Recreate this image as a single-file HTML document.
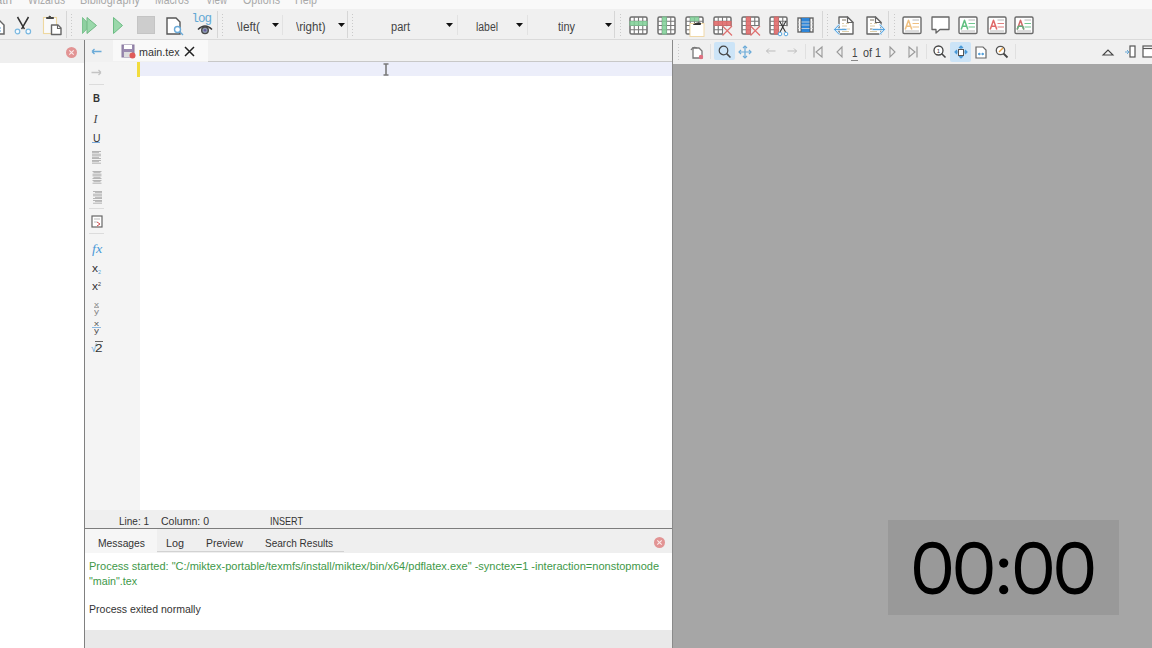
<!DOCTYPE html>
<html><head><meta charset="utf-8">
<style>
*{margin:0;padding:0;box-sizing:border-box}
html,body{width:1152px;height:648px;overflow:hidden;background:#f0f0f0;font-family:"Liberation Sans",sans-serif}
.a{position:absolute}
svg.a{overflow:visible}
.t{position:absolute;white-space:nowrap;line-height:1;transform-origin:0 0}
</style></head><body>
<div class="a" style="left:0px;top:0px;width:1152px;height:9px;background:#f9f9f9;"></div>
<div class="a" style="left:0px;top:9px;width:1152px;height:30px;background:#f0f0f0;"></div>
<div class="a" style="left:0px;top:39px;width:1152px;height:1px;background:#dadada;"></div>
<div class="a" style="left:0px;top:40px;width:84px;height:608px;background:#ffffff;"></div>
<div class="a" style="left:0px;top:40px;width:84px;height:23px;background:#efefef;"></div>
<div class="a" style="left:85px;top:40px;width:587px;height:22px;background:#f1f1f1;"></div>
<div class="a" style="left:113px;top:40px;width:95px;height:21px;background:#f9f9f9;"></div>
<div class="a" style="left:208px;top:61px;width:464px;height:1px;background:#c8c8c8;"></div>
<div class="a" style="left:85px;top:62px;width:55px;height:448px;background:#f4f4f4;"></div>
<div class="a" style="left:140px;top:62px;width:532px;height:448px;background:#ffffff;"></div>
<div class="a" style="left:140px;top:62px;width:532px;height:14px;background:#eceefa;"></div>
<div class="a" style="left:137px;top:62px;width:3px;height:15px;background:#f2dc3c;"></div>
<div class="a" style="left:85px;top:510px;width:587px;height:18px;background:#efefef;"></div>
<div class="a" style="left:85px;top:528px;width:587px;height:1px;background:#7c7c7c;"></div>
<div class="a" style="left:85px;top:529px;width:587px;height:24px;background:#efefef;"></div>
<div class="a" style="left:85px;top:529px;width:72px;height:24px;background:#f6f6f6;"></div>
<div class="a" style="left:157px;top:551px;width:187px;height:1px;background:#d2d2d2;"></div>
<div class="a" style="left:85px;top:553px;width:587px;height:77px;background:#ffffff;"></div>
<div class="a" style="left:85px;top:630px;width:587px;height:18px;background:#e9e9e9;"></div>
<div class="a" style="left:84px;top:40px;width:1px;height:608px;background:#808080;"></div>
<div class="a" style="left:672px;top:40px;width:1px;height:608px;background:#8a8a8a;"></div>
<div class="a" style="left:673px;top:40px;width:479px;height:24px;background:#f0f0f0;"></div>
<div class="a" style="left:673px;top:64px;width:479px;height:584px;background:#a6a6a6;"></div>
<div class="a" style="left:888px;top:520px;width:231px;height:95px;background:#999999;"></div>
<div class="a" style="left:0;top:0;width:1152px;height:9px;overflow:hidden">
<div class="t" style="left:-14.00px;top:-5.86px;font-size:12px;color:#a9a9a9;transform:scaleX(0.9747);">Math</div>
<div class="t" style="left:28.00px;top:-5.86px;font-size:12px;color:#a9a9a9;transform:scaleX(0.8538);">Wizards</div>
<div class="t" style="left:80.00px;top:-5.86px;font-size:12px;color:#a9a9a9;transform:scaleX(0.9086);">Bibliography</div>
<div class="t" style="left:155.00px;top:-5.86px;font-size:12px;color:#a9a9a9;transform:scaleX(0.8643);">Macros</div>
<div class="t" style="left:206.00px;top:-5.86px;font-size:12px;color:#a9a9a9;transform:scaleX(0.8142);">View</div>
<div class="t" style="left:243.00px;top:-5.86px;font-size:12px;color:#a9a9a9;transform:scaleX(0.8947);">Options</div>
<div class="t" style="left:295.00px;top:-5.86px;font-size:12px;color:#a9a9a9;transform:scaleX(0.8915);">Help</div>
</div>
<div class="a" style="left:66px;top:11px;width:1px;height:27px;background:#d6d6d6;"></div>
<div class="a" style="left:217px;top:11px;width:1px;height:27px;background:#d6d6d6;"></div>
<div class="a" style="left:347px;top:11px;width:1px;height:27px;background:#d6d6d6;"></div>
<div class="a" style="left:614px;top:11px;width:1px;height:27px;background:#d6d6d6;"></div>
<div class="a" style="left:822px;top:11px;width:1px;height:27px;background:#d6d6d6;"></div>
<div class="a" style="left:888px;top:11px;width:1px;height:27px;background:#d6d6d6;"></div>
<div class="a" style="left:71px;top:14px;width:1px;height:23px;background-image:linear-gradient(#cacaca 34%,transparent 34%);background-size:1px 3px"></div>
<div class="a" style="left:222px;top:14px;width:1px;height:23px;background-image:linear-gradient(#cacaca 34%,transparent 34%);background-size:1px 3px"></div>
<div class="a" style="left:352px;top:14px;width:1px;height:23px;background-image:linear-gradient(#cacaca 34%,transparent 34%);background-size:1px 3px"></div>
<div class="a" style="left:620px;top:14px;width:1px;height:23px;background-image:linear-gradient(#cacaca 34%,transparent 34%);background-size:1px 3px"></div>
<div class="a" style="left:827px;top:14px;width:1px;height:23px;background-image:linear-gradient(#cacaca 34%,transparent 34%);background-size:1px 3px"></div>
<div class="a" style="left:894px;top:14px;width:1px;height:23px;background-image:linear-gradient(#cacaca 34%,transparent 34%);background-size:1px 3px"></div>
<div class="a" style="left:282px;top:15px;width:1px;height:20px;background:#e2e2e2;"></div>
<div class="a" style="left:457px;top:15px;width:1px;height:20px;background:#e2e2e2;"></div>
<div class="a" style="left:527px;top:15px;width:1px;height:20px;background:#e2e2e2;"></div>
<div class="t" style="left:237.00px;top:20.84px;font-size:12px;color:#444;transform:scaleX(0.9856);">\left(</div>
<div class="t" style="left:295.50px;top:20.84px;font-size:12px;color:#444;transform:scaleX(0.9618);">\right)</div>
<div class="t" style="left:391.00px;top:20.84px;font-size:12px;color:#444;transform:scaleX(0.9190);">part</div>
<div class="t" style="left:476.00px;top:20.84px;font-size:12px;color:#444;transform:scaleX(0.8678);">label</div>
<div class="t" style="left:558.00px;top:20.84px;font-size:12px;color:#444;transform:scaleX(0.9104);">tiny</div>
<svg class="a" style="left:272px;top:23px" width="7" height="4" viewBox="0 0 7 4"><path d="M0 0H7L3.5 4Z" fill="#111"/></svg>
<svg class="a" style="left:338px;top:23px" width="7" height="4" viewBox="0 0 7 4"><path d="M0 0H7L3.5 4Z" fill="#111"/></svg>
<svg class="a" style="left:446px;top:23px" width="7" height="4" viewBox="0 0 7 4"><path d="M0 0H7L3.5 4Z" fill="#111"/></svg>
<svg class="a" style="left:516px;top:23px" width="7" height="4" viewBox="0 0 7 4"><path d="M0 0H7L3.5 4Z" fill="#111"/></svg>
<svg class="a" style="left:605px;top:23px" width="7" height="4" viewBox="0 0 7 4"><path d="M0 0H7L3.5 4Z" fill="#111"/></svg>
<svg class="a" style="left:-10px;top:19px" width="15" height="16" viewBox="0 0 15 16"><path d="M1 1H9L14 6V15H1Z" fill="#fff" stroke="#666" stroke-width="1.5"/><path d="M4 9H11M4 12H11" stroke="#5aa0d8" stroke-width="1.2"/></svg>
<svg class="a" style="left:14px;top:16px" width="18" height="20" viewBox="0 0 18 20"><path d="M3.5 1L9 10.5Q10 12.5 10.5 13M14.5 1L9 10.5Q8 12.5 7.5 13" stroke="#333" stroke-width="1.5" fill="none"/><circle cx="3.5" cy="15.5" r="2.3" fill="#f4faff" stroke="#7ab8e0" stroke-width="1.2"/><circle cx="14.3" cy="15.5" r="2.3" fill="#f4faff" stroke="#7ab8e0" stroke-width="1.2"/></svg>
<svg class="a" style="left:42px;top:15px" width="20" height="21" viewBox="0 0 20 21"><rect x="1.5" y="2.5" width="13" height="16" fill="#fafafa" stroke="#eed8a0" stroke-width="1.1"/><path d="M4.5 3.5H11.5V2.5H9L8 1H7.5L6.5 2.5H4.5Z" fill="#444" stroke="#444" stroke-width="1"/><path d="M9.5 10H16L19 13V19.5H9.5Z" fill="#fff" stroke="#666" stroke-width="1.4" stroke-linejoin="round"/><path d="M15.5 10V13.5H19" fill="none" stroke="#666" stroke-width="1.1"/></svg>
<svg class="a" style="left:82px;top:17px" width="16" height="18" viewBox="0 0 16 18"><path d="M0.5 0.5L8 8.5L0.5 16.5Z" fill="#8fd0a0" stroke="#7cc490"/><path d="M5 0.5L14.5 8.5L5 16.5Z" fill="#9ad8aa" stroke="#70b884"/></svg>
<svg class="a" style="left:113px;top:17px" width="10" height="18" viewBox="0 0 10 18"><path d="M0.5 0.5L9.5 8.5L0.5 16.5Z" fill="#9ad8aa" stroke="#6cbc84"/></svg>
<div class="a" style="left:137px;top:16px;width:18px;height:18px;background:#cdcdcd;border:1px solid #c4c4c4"></div>
<svg class="a" style="left:166px;top:17px" width="18" height="19" viewBox="0 0 18 19"><path d="M1 1H10L14 5V17H1Z" fill="#fff" stroke="#555" stroke-width="1.4"/><circle cx="11.5" cy="12.5" r="3" fill="#fff" stroke="#6aaad8" stroke-width="1.4"/><path d="M13.5 14.5L17 18" stroke="#6aaad8" stroke-width="1.4"/></svg>
<div class="t" style="left:191.5px;top:12.5px;font-size:12.5px;color:#62a8d4;font-family:Liberation Mono,monospace;letter-spacing:-1px">log</div>
<svg class="a" style="left:197px;top:24px" width="16" height="11" viewBox="0 0 16 11"><path d="M1 5.5Q8 -1.5 15 5.5" fill="none" stroke="#3a3a3a" stroke-width="1.5"/><circle cx="8" cy="6.3" r="3.3" fill="#8a9ab0" stroke="#4a4a4a" stroke-width="1.4"/><circle cx="8" cy="6.3" r="1.2" fill="#6a5aa0"/></svg>
<svg class="a" style="left:629px;top:15.5px" width="19" height="19" viewBox="0 0 19 19"><rect x="1" y="1" width="17" height="17" fill="#fff"/><rect x="1" y="1" width="17" height="17" rx="1.5" fill="none" stroke="#6e6e6e" stroke-width="1.5"/><path d="M5.25 1V18M1 5.25H18" stroke="#777" stroke-width="1.1"/><path d="M9.5 1V18M1 9.5H18" stroke="#777" stroke-width="1.1"/><path d="M13.75 1V18M1 13.75H18" stroke="#777" stroke-width="1.1"/><rect x="0.5" y="5" width="18" height="4.8" fill="#7fd096" opacity="0.85"/></svg>
<svg class="a" style="left:656.5px;top:15.5px" width="19" height="19" viewBox="0 0 19 19"><rect x="1" y="1" width="17" height="17" fill="#fff"/><rect x="1" y="1" width="17" height="17" rx="1.5" fill="none" stroke="#6e6e6e" stroke-width="1.5"/><path d="M5.25 1V18M1 5.25H18" stroke="#777" stroke-width="1.1"/><path d="M9.5 1V18M1 9.5H18" stroke="#777" stroke-width="1.1"/><path d="M13.75 1V18M1 13.75H18" stroke="#777" stroke-width="1.1"/><rect x="5" y="0.5" width="4.8" height="18" fill="#7fd096" opacity="0.85"/></svg>
<svg class="a" style="left:685px;top:15.5px" width="19" height="19" viewBox="0 0 19 19"><rect x="1" y="1" width="17" height="17" fill="#fff"/><rect x="1" y="1" width="17" height="17" rx="1.5" fill="none" stroke="#6e6e6e" stroke-width="1.5"/><path d="M5.25 1V18M1 5.25H18" stroke="#777" stroke-width="1.1"/><path d="M9.5 1V18M1 9.5H18" stroke="#777" stroke-width="1.1"/><path d="M13.75 1V18M1 13.75H18" stroke="#777" stroke-width="1.1"/><rect x="5" y="0.5" width="9" height="4.8" fill="#7fd096" opacity="0.85"/></svg>
<svg class="a" style="left:689px;top:21px" width="16" height="16" viewBox="0 0 16 16"><rect x="1" y="2.5" width="14" height="13" fill="#fff" stroke="#f0d8a8" stroke-width="1"/><path d="M4.5 3.5H11.5V2H8Z" fill="#333" stroke="#333" stroke-width="1"/></svg>
<svg class="a" style="left:713px;top:15.5px" width="19" height="19" viewBox="0 0 19 19"><rect x="1" y="1" width="17" height="17" fill="#fff"/><rect x="1" y="1" width="17" height="17" rx="1.5" fill="none" stroke="#6e6e6e" stroke-width="1.5"/><path d="M5.25 1V18M1 5.25H18" stroke="#777" stroke-width="1.1"/><path d="M9.5 1V18M1 9.5H18" stroke="#777" stroke-width="1.1"/><path d="M13.75 1V18M1 13.75H18" stroke="#777" stroke-width="1.1"/><rect x="10.2" y="10.2" width="9" height="9" fill="#f0f0f0"/><rect x="0.5" y="5" width="18" height="4.8" fill="#e06a6a" opacity="0.9"/><path d="M9.5 10L19 19.5M19 10L9.5 19.5" stroke="#e07070" stroke-width="1.2"/></svg>
<svg class="a" style="left:741px;top:15.5px" width="19" height="19" viewBox="0 0 19 19"><rect x="1" y="1" width="17" height="17" fill="#fff"/><rect x="1" y="1" width="17" height="17" rx="1.5" fill="none" stroke="#6e6e6e" stroke-width="1.5"/><path d="M5.25 1V18M1 5.25H18" stroke="#777" stroke-width="1.1"/><path d="M9.5 1V18M1 9.5H18" stroke="#777" stroke-width="1.1"/><path d="M13.75 1V18M1 13.75H18" stroke="#777" stroke-width="1.1"/><rect x="10.2" y="10.2" width="9" height="9" fill="#f0f0f0"/><rect x="5" y="0.5" width="4.8" height="18" fill="#e06a6a" opacity="0.9"/><path d="M9.5 10L19 19.5M19 10L9.5 19.5" stroke="#e07070" stroke-width="1.2"/></svg>
<svg class="a" style="left:769px;top:15.5px" width="19" height="19" viewBox="0 0 19 19"><rect x="1" y="1" width="17" height="17" fill="#fff"/><rect x="1" y="1" width="17" height="17" rx="1.5" fill="none" stroke="#6e6e6e" stroke-width="1.5"/><path d="M5.25 1V18M1 5.25H18" stroke="#777" stroke-width="1.1"/><path d="M9.5 1V18M1 9.5H18" stroke="#777" stroke-width="1.1"/><path d="M13.75 1V18M1 13.75H18" stroke="#777" stroke-width="1.1"/><rect x="10.2" y="10.2" width="9" height="9" fill="#f0f0f0"/><rect x="5" y="0.5" width="4.8" height="18" fill="#e06a6a" opacity="0.9"/><path d="M10.5 5L16.5 16M17 5L11 16" stroke="#333" stroke-width="1.1"/><circle cx="11" cy="18" r="1.8" fill="#fff" stroke="#5aa8e0"/><circle cx="17" cy="18" r="1.8" fill="#fff" stroke="#5aa8e0"/></svg>
<svg class="a" style="left:797px;top:17px" width="17" height="16" viewBox="0 0 17 16"><rect x="1" y="1" width="15" height="14" fill="#fff" stroke="#666" stroke-width="1.4"/><rect x="4" y="1" width="9" height="14" fill="#2f86d8"/><path d="M4 5H16M4 8H16M4 11.5H16M1 5H4M1 8H4M1 11.5H4" stroke="#ddd" stroke-width="0.8"/><path d="M4 1V15M13 1V15" stroke="#444" stroke-width="0.8"/></svg>
<svg class="a" style="left:838px;top:15.5px" width="16" height="20" viewBox="0 0 16 20"><path d="M1 1H9.5L15 6.5V18H1Z" fill="#fff" stroke="#666" stroke-width="1.4" stroke-linejoin="round"/><path d="M9.5 1V6.5H15Z" fill="#fff" stroke="#666" stroke-width="1.2" stroke-linejoin="round"/><path d="M4 4H8M4 7.5H6M8 7.5H11M4 10H9M4 13H12M4 15.5H11" stroke="#d8c8a0" stroke-width="0.9"/><path d="M4 4H8M4 13H7" stroke="#888" stroke-width="0.9"/><path d="M-3.5 13.5H8M-3.5 13.5L0.8 9M-3.5 13.5L0.8 18" fill="none" stroke-linecap="round" stroke="#d8ecfa" stroke-width="2.4"/><path d="M-3.5 13.5H8M-3.5 13.5L0.8 9M-3.5 13.5L0.8 18" fill="none" stroke-linecap="round" stroke="#5aa6e0" stroke-width="1"/></svg>
<svg class="a" style="left:866px;top:15.5px" width="16" height="20" viewBox="0 0 16 20"><path d="M1 1H9.5L15 6.5V18H1Z" fill="#fff" stroke="#666" stroke-width="1.4" stroke-linejoin="round"/><path d="M9.5 1V6.5H15Z" fill="#fff" stroke="#666" stroke-width="1.2" stroke-linejoin="round"/><path d="M4 4H8M4 7.5H6M8 7.5H11M4 10H9M4 13H12M4 15.5H11" stroke="#d8c8a0" stroke-width="0.9"/><path d="M4 4H8M4 13H7" stroke="#888" stroke-width="0.9"/><path d="M7 13.5H18.5M18.5 13.5L14.2 9M18.5 13.5L14.2 18" fill="none" stroke-linecap="round" stroke="#d8ecfa" stroke-width="2.4"/><path d="M7 13.5H18.5M18.5 13.5L14.2 9M18.5 13.5L14.2 18" fill="none" stroke-linecap="round" stroke="#5aa6e0" stroke-width="1"/></svg>
<svg class="a" style="left:902px;top:16px" width="20" height="19" viewBox="0 0 20 19"><rect x="1" y="1" width="18" height="16.5" rx="1.2" fill="#fff" stroke="#6a6a6a" stroke-width="1.4"/><path d="M3.2 13.5L6.5 4.2L9.8 13.5M4.3 10.3H8.7" fill="none" stroke="#f0c080" stroke-width="1.5" stroke-linejoin="round"/><path d="M10.5 4H17" stroke="#b0b0b0" stroke-width="0.9"/><path d="M10.5 7.5H17M10.5 11H17" stroke="#f0c080" stroke-width="1.2"/><path d="M3 15H17" stroke="#b0b0b0" stroke-width="0.9"/></svg>
<svg class="a" style="left:931px;top:16px" width="19" height="18" viewBox="0 0 19 18"><path d="M1 1H18V13.5H9L5 17V13.5H1Z" fill="#fff" stroke="#666" stroke-width="1.3" stroke-linejoin="round"/></svg>
<svg class="a" style="left:958px;top:16px" width="20" height="19" viewBox="0 0 20 19"><rect x="1" y="1" width="18" height="16.5" rx="1.2" fill="#fff" stroke="#6a6a6a" stroke-width="1.4"/><path d="M3.2 13.5L6.5 4.2L9.8 13.5M4.3 10.3H8.7" fill="none" stroke="#60c080" stroke-width="1.5" stroke-linejoin="round"/><path d="M10.5 4H17" stroke="#b0b0b0" stroke-width="0.9"/><path d="M10.5 7.5H17M10.5 11H17" stroke="#70c890" stroke-width="1.2"/><path d="M3 15H17" stroke="#b0b0b0" stroke-width="0.9"/></svg>
<svg class="a" style="left:986.5px;top:16px" width="20" height="19" viewBox="0 0 20 19"><rect x="1" y="1" width="18" height="16.5" rx="1.2" fill="#fff" stroke="#6a6a6a" stroke-width="1.4"/><path d="M3.2 13.5L6.5 4.2L9.8 13.5M4.3 10.3H8.7" fill="none" stroke="#e06868" stroke-width="1.5" stroke-linejoin="round"/><path d="M10.5 4H17" stroke="#b0b0b0" stroke-width="0.9"/><path d="M10.5 7.5H17M10.5 11H17" stroke="#e08080" stroke-width="1.2"/><path d="M3 15H17" stroke="#b0b0b0" stroke-width="0.9"/></svg>
<svg class="a" style="left:1014px;top:16px" width="20" height="19" viewBox="0 0 20 19"><rect x="1" y="1" width="18" height="16.5" rx="1.2" fill="#fff" stroke="#6a6a6a" stroke-width="1.4"/><path d="M3.2 13.5L6.5 4.2L9.8 13.5M4.3 10.3H8.7" fill="none" stroke="#d06868" stroke-width="1.5" stroke-linejoin="round"/><path d="M4.3 10.3L3.2 13.5M8.7 10.3L9.8 13.5M4.3 10.3H8.7" stroke="#60b080" stroke-width="1.5"/><path d="M10.5 4H17" stroke="#b0b0b0" stroke-width="0.9"/><path d="M10.5 7.5H17M10.5 11H17" stroke="#70c890" stroke-width="1.2"/><path d="M3 15H17" stroke="#b0b0b0" stroke-width="0.9"/></svg>
<svg class="a" style="left:66px;top:47px" width="11" height="11" viewBox="0 0 11 11"><circle cx="5.5" cy="5.5" r="5.5" fill="#e29494"/><path d="M3.3 3.3L7.7 7.7M7.7 3.3L3.3 7.7" stroke="#fbeaea" stroke-width="1.1"/></svg>
<svg class="a" style="left:121px;top:44px" width="15" height="15" viewBox="0 0 15 15"><rect x="1" y="1" width="12" height="12" fill="#9a8ab0" stroke="#8a7aa0"/><rect x="3" y="1" width="8" height="4" fill="#fff"/><rect x="3" y="8" width="8" height="5" fill="#ddd"/><circle cx="11.5" cy="11.5" r="3" fill="#e05a5a"/></svg>
<div class="t" style="left:138.50px;top:46.67px;font-size:11.5px;color:#333;transform:scaleX(0.9319);">main.tex</div>
<svg class="a" style="left:184px;top:46px" width="11" height="11" viewBox="0 0 11 11"><path d="M1 1L10 10M10 1L1 10" stroke="#222" stroke-width="1.5"/></svg>
<svg class="a" style="left:91px;top:48px" width="11" height="7" viewBox="0 0 11 7"><path d="M1 3.5H10.5M1 3.5L3.5 1M1 3.5L3.5 6" stroke="#6aaad8" stroke-width="1.3" fill="none"/></svg>
<svg class="a" style="left:91px;top:69px" width="11" height="7" viewBox="0 0 11 7"><path d="M0.5 3.5H10M10 3.5L7.5 1M10 3.5L7.5 6" stroke="#c4c4c4" stroke-width="1.3" fill="none"/></svg>
<div class="a" style="left:89px;top:84px;width:15px;height:1px;background:#dcdcdc;"></div>
<div class="t" style="left:92.50px;top:93.49px;font-size:11px;color:#333;font-weight:bold;transform:scaleX(0.8812);">B</div>
<div class="t" style="left:93.50px;top:112.64px;font-size:12px;color:#444;transform:scaleX(1.0000);font-style:italic;font-family:Liberation Serif,serif;">I</div>
<div class="t" style="left:92.50px;top:132.99px;font-size:11px;color:#333;transform:scaleX(0.9441);">U</div>
<div class="a" style="left:92px;top:142px;width:8px;height:1px;background:#7aa8d8;"></div>
<svg class="a" style="left:92px;top:150px" width="10" height="14" viewBox="0 0 10 14"><rect x="0" y="1.0" width="9" height="0.7" fill="#9a9a9a"/><rect x="0" y="2.4" width="7" height="0.7" fill="#9a9a9a"/><rect x="0" y="3.8" width="9" height="0.7" fill="#9a9a9a"/><rect x="0" y="5.5" width="9" height="0.7" fill="#9a9a9a"/><rect x="0" y="6.9" width="7" height="0.7" fill="#9a9a9a"/><rect x="0" y="8.3" width="9" height="0.7" fill="#9a9a9a"/><rect x="0" y="10.0" width="9" height="0.7" fill="#9a9a9a"/><rect x="0" y="11.4" width="7" height="0.7" fill="#9a9a9a"/><rect x="0" y="12.8" width="9" height="0.7" fill="#9a9a9a"/></svg>
<svg class="a" style="left:92px;top:170px" width="10" height="14" viewBox="0 0 10 14"><rect x="0.5" y="1.0" width="9" height="0.7" fill="#9a9a9a"/><rect x="1.5" y="2.4" width="7" height="0.7" fill="#9a9a9a"/><rect x="0.5" y="3.8" width="9" height="0.7" fill="#9a9a9a"/><rect x="0.5" y="5.5" width="9" height="0.7" fill="#9a9a9a"/><rect x="1.5" y="6.9" width="7" height="0.7" fill="#9a9a9a"/><rect x="0.5" y="8.3" width="9" height="0.7" fill="#9a9a9a"/><rect x="0.5" y="10.0" width="9" height="0.7" fill="#9a9a9a"/><rect x="1.5" y="11.4" width="7" height="0.7" fill="#9a9a9a"/><rect x="0.5" y="12.8" width="9" height="0.7" fill="#9a9a9a"/></svg>
<svg class="a" style="left:92px;top:190px" width="10" height="14" viewBox="0 0 10 14"><rect x="1" y="1.0" width="9" height="0.7" fill="#9a9a9a"/><rect x="3" y="2.4" width="7" height="0.7" fill="#9a9a9a"/><rect x="1" y="3.8" width="9" height="0.7" fill="#9a9a9a"/><rect x="1" y="5.5" width="9" height="0.7" fill="#9a9a9a"/><rect x="3" y="6.9" width="7" height="0.7" fill="#9a9a9a"/><rect x="1" y="8.3" width="9" height="0.7" fill="#9a9a9a"/><rect x="1" y="10.0" width="9" height="0.7" fill="#9a9a9a"/><rect x="3" y="11.4" width="7" height="0.7" fill="#9a9a9a"/><rect x="1" y="12.8" width="9" height="0.7" fill="#9a9a9a"/></svg>
<div class="a" style="left:89px;top:208px;width:15px;height:1px;background:#dcdcdc;"></div>
<svg class="a" style="left:91px;top:215px" width="12" height="13" viewBox="0 0 12 13"><rect x="1" y="1" width="10" height="11" fill="#fff" stroke="#666" stroke-width="1.2"/><path d="M3 4H9M3 7H6" stroke="#aaa" stroke-width="0.8"/><path d="M6 7L9 9L6 11" stroke="#d05050" fill="none" stroke-width="1"/></svg>
<div class="a" style="left:89px;top:233px;width:15px;height:1px;background:#dcdcdc;"></div>
<div class="t" style="left:92.00px;top:241.80px;font-size:13px;color:#4a9ad8;transform:scaleX(1.0879);font-style:italic;font-family:Liberation Serif,serif;">fx</div>
<div class="t" style="left:92.00px;top:264.34px;font-size:10px;color:#333;transform:scaleX(1.2000);">x</div>
<div class="t" style="left:98.00px;top:269.57px;font-size:5px;color:#5aa8d8;transform:scaleX(1.0790);">2</div>
<div class="t" style="left:92.00px;top:282.34px;font-size:10px;color:#333;transform:scaleX(1.2000);">x</div>
<div class="t" style="left:98.00px;top:281.57px;font-size:5px;color:#333;transform:scaleX(1.0790);">2</div>
<div class="t" style="left:94.00px;top:300.87px;font-size:7px;color:#888;transform:scaleX(1.4286);">x</div>
<div class="a" style="left:94px;top:307px;width:5px;height:1px;background:#aaa;"></div>
<div class="t" style="left:94.00px;top:307.87px;font-size:7px;color:#888;transform:scaleX(1.4286);">y</div>
<div class="t" style="left:94.00px;top:320.03px;font-size:8px;color:#555;transform:scaleX(1.2500);">x</div>
<div class="a" style="left:92px;top:327px;width:9px;height:1px;background:#8ab8e0;"></div>
<div class="t" style="left:94.00px;top:327.03px;font-size:8px;color:#555;transform:scaleX(1.2500);">y</div>
<div class="t" style="left:90.50px;top:343.49px;font-size:11px;color:#4a9ad8;transform:scaleX(0.9109);">√</div>
<div class="t" style="left:95.00px;top:343.49px;font-size:11px;color:#333;transform:scaleX(1.2261);">2</div>
<div class="a" style="left:95px;top:341px;width:8px;height:1px;background:#666;"></div>
<svg class="a" style="left:383px;top:63px" width="6" height="13" viewBox="0 0 6 13"><path d="M0.5 1H5.5M0.5 12H5.5M3 1V12" stroke="#7a7a7a" stroke-width="1.6"/></svg>
<div class="t" style="left:118.50px;top:516.29px;font-size:11px;color:#333;transform:scaleX(0.9084);">Line: 1</div>
<div class="t" style="left:161.00px;top:516.29px;font-size:11px;color:#333;transform:scaleX(0.9575);">Column: 0</div>
<div class="t" style="left:269.50px;top:516.29px;font-size:11px;color:#333;transform:scaleX(0.8222);">INSERT</div>
<div class="t" style="left:97.50px;top:538.49px;font-size:11px;color:#333;transform:scaleX(0.9375);">Messages</div>
<div class="t" style="left:166.00px;top:538.49px;font-size:11px;color:#333;transform:scaleX(0.9809);">Log</div>
<div class="t" style="left:206.00px;top:538.49px;font-size:11px;color:#333;transform:scaleX(0.9458);">Preview</div>
<div class="t" style="left:265.00px;top:538.49px;font-size:11px;color:#333;transform:scaleX(0.9117);">Search Results</div>
<svg class="a" style="left:654px;top:537px" width="11" height="11" viewBox="0 0 11 11"><circle cx="5.5" cy="5.5" r="5.5" fill="#e29494"/><path d="M3.3 3.3L7.7 7.7M7.7 3.3L3.3 7.7" stroke="#fbeaea" stroke-width="1.1"/></svg>
<div class="t" style="left:89.00px;top:561.29px;font-size:11px;color:#3e9848;transform:scaleX(1.0017);">Process started: &quot;C:/miktex-portable/texmfs/install/miktex/bin/x64/pdflatex.exe&quot; -synctex=1 -interaction=nonstopmode</div>
<div class="t" style="left:89.00px;top:575.69px;font-size:11px;color:#3e9848;transform:scaleX(0.9721);">&quot;main&quot;.tex</div>
<div class="t" style="left:89.00px;top:604.49px;font-size:11px;color:#333;transform:scaleX(0.9567);">Process exited normally</div>
<div class="a" style="left:678px;top:44px;width:1px;height:16px;background-image:linear-gradient(#cacaca 34%,transparent 34%);background-size:1px 3px"></div>
<svg class="a" style="left:690px;top:46px" width="14" height="13" viewBox="0 0 14 13"><path d="M3 2H9L12 5V12H3Z" fill="#fff" stroke="#777" stroke-width="1.3"/><path d="M1 4Q3 0 7 2" stroke="#777" fill="none" stroke-width="1.2"/><circle cx="11" cy="11" r="2.2" fill="#e07080"/></svg>
<div class="a" style="left:710px;top:44px;width:1px;height:15px;background:#e0e0e0;"></div>
<div class="a" style="left:714px;top:42px;width:21px;height:18px;background:#cce4f7;border-radius:2px"></div>
<svg class="a" style="left:718px;top:45px" width="14" height="14" viewBox="0 0 14 14"><circle cx="5.5" cy="5.5" r="4.3" fill="none" stroke="#444" stroke-width="1.2"/><path d="M8.6 8.6L12.5 12.5" stroke="#444" stroke-width="1.5"/></svg>
<svg class="a" style="left:738px;top:45px" width="14" height="14" viewBox="0 0 14 14"><path d="M7 1V13M1 7H13" stroke="#6aaad8" stroke-width="1.2"/><path d="M5 3L7 1L9 3M5 11L7 13L9 11M3 5L1 7L3 9M11 5L13 7L11 9" stroke="#6aaad8" fill="none" stroke-width="1.2"/></svg>
<svg class="a" style="left:766px;top:48px" width="10" height="6" viewBox="0 0 10 6"><path d="M0.5 3H9.5M0.5 3L3 0.5M0.5 3L3 5.5" stroke="#bbb" fill="none"/></svg>
<svg class="a" style="left:787px;top:48px" width="10" height="6" viewBox="0 0 10 6"><path d="M0.5 3H9.5M9.5 3L7 0.5M9.5 3L7 5.5" stroke="#bbb" fill="none"/></svg>
<div class="a" style="left:805px;top:44px;width:1px;height:15px;background:#e0e0e0;"></div>
<svg class="a" style="left:813px;top:46px" width="10" height="12" viewBox="0 0 10 12"><path d="M1 0.5V11.5" stroke="#999" stroke-width="1.2"/><path d="M9 1L3 6L9 11Z" fill="none" stroke="#999" stroke-width="1.1"/></svg>
<svg class="a" style="left:836px;top:46px" width="7" height="12" viewBox="0 0 7 12"><path d="M6 1L1 6L6 11Z" fill="none" stroke="#999" stroke-width="1.1"/></svg>
<div class="t" style="left:851.50px;top:47.14px;font-size:12px;color:#444;transform:scaleX(0.8242);">1</div>
<div class="a" style="left:851px;top:60px;width:7px;height:1px;background:#888;"></div>
<div class="t" style="left:863.00px;top:47.14px;font-size:12px;color:#444;transform:scaleX(0.8994);">of 1</div>
<svg class="a" style="left:889px;top:46px" width="7" height="12" viewBox="0 0 7 12"><path d="M1 1L6 6L1 11Z" fill="none" stroke="#999" stroke-width="1.1"/></svg>
<svg class="a" style="left:908px;top:46px" width="10" height="12" viewBox="0 0 10 12"><path d="M1 1L7 6L1 11Z" fill="none" stroke="#999" stroke-width="1.1"/><path d="M9 0.5V11.5" stroke="#999" stroke-width="1.2"/></svg>
<div class="a" style="left:926px;top:44px;width:1px;height:15px;background:#e0e0e0;"></div>
<svg class="a" style="left:933px;top:45px" width="13" height="14" viewBox="0 0 13 14"><circle cx="5.5" cy="5.5" r="4.5" fill="#fff" stroke="#444" stroke-width="1.3"/><path d="M8.5 8.5L12.5 12.5" stroke="#444" stroke-width="1.6"/><text x="5.5" y="8" font-size="6" text-anchor="middle" fill="#444" font-family="Liberation Sans">1</text></svg>
<div class="a" style="left:950px;top:42px;width:21px;height:20px;background:#cce4f7;border-radius:2px"></div>
<svg class="a" style="left:954px;top:45px" width="14" height="14" viewBox="0 0 14 14"><path d="M7 1V13M1 7H13" stroke="#4a9ad8" stroke-width="1.2"/><path d="M5 3L7 1L9 3M5 11L7 13L9 11M3 5L1 7L3 9M11 5L13 7L11 9" stroke="#4a9ad8" fill="#4a9ad8" stroke-width="1.2"/><rect x="4.5" y="4.5" width="5" height="6" fill="#fff" stroke="#555"/></svg>
<svg class="a" style="left:975px;top:46px" width="12" height="13" viewBox="0 0 12 13"><path d="M1 1H8L11 4V12H1Z" fill="#fff" stroke="#666" stroke-width="1.2"/><path d="M3 8L5 7L5 9ZM9 8L7 7L7 9Z" fill="#4a9ad8" stroke="#4a9ad8" stroke-width="0.8"/></svg>
<svg class="a" style="left:995px;top:45px" width="14" height="14" viewBox="0 0 14 14"><circle cx="5.5" cy="5.5" r="4.2" fill="#fff" stroke="#555" stroke-width="1.3"/><path d="M8.5 8.5L12.5 12.5" stroke="#444" stroke-width="1.8"/><path d="M4 7L8 3" stroke="#e8a040" stroke-width="1.4"/></svg>
<div class="a" style="left:1015px;top:44px;width:1px;height:15px;background:#e0e0e0;"></div>
<svg class="a" style="left:1102px;top:49px" width="12" height="7" viewBox="0 0 12 7"><path d="M1 6H11L6 1Z" fill="none" stroke="#444" stroke-width="1.1"/></svg>
<svg class="a" style="left:1125px;top:45px" width="11" height="13" viewBox="0 0 11 13"><rect x="5" y="1" width="5" height="11" fill="#fff" stroke="#555" stroke-width="1.2"/><path d="M0 7H4M2 5L4 7L2 9" stroke="#6aaad8" fill="none"/></svg>
<svg class="a" style="left:1142px;top:45px" width="12" height="13" viewBox="0 0 12 13"><rect x="1" y="1" width="12" height="11" fill="#fff" stroke="#555" stroke-width="1.2"/><path d="M1 3.5H13" stroke="#555" stroke-width="1.2"/></svg>
<svg class="a" style="left:0;top:0" width="1152" height="648" viewBox="0 0 1152 648"><path d="M932.5 544.7C942.42 544.7 948.0 553.124 948.0 568.1C948.0 583.076 942.42 591.5 932.5 591.5C922.58 591.5 917.0 583.076 917.0 568.1C917.0 553.124 922.58 544.7 932.5 544.7Z" fill="none" stroke="#000" stroke-width="6"/><path d="M974 544.7C983.92 544.7 989.5 553.124 989.5 568.1C989.5 583.076 983.92 591.5 974 591.5C964.08 591.5 958.5 583.076 958.5 568.1C958.5 553.124 964.08 544.7 974 544.7Z" fill="none" stroke="#000" stroke-width="6"/><path d="M1033.4 544.7C1043.3200000000002 544.7 1048.9 553.124 1048.9 568.1C1048.9 583.076 1043.3200000000002 591.5 1033.4 591.5C1023.4800000000001 591.5 1017.9000000000001 583.076 1017.9000000000001 568.1C1017.9000000000001 553.124 1023.4800000000001 544.7 1033.4 544.7Z" fill="none" stroke="#000" stroke-width="6"/><path d="M1074.8 544.7C1084.72 544.7 1090.3 553.124 1090.3 568.1C1090.3 583.076 1084.72 591.5 1074.8 591.5C1064.8799999999999 591.5 1059.3 583.076 1059.3 568.1C1059.3 553.124 1064.8799999999999 544.7 1074.8 544.7Z" fill="none" stroke="#000" stroke-width="6"/><circle cx="1003.7" cy="563.1" r="4.6" fill="#000"/><circle cx="1003.7" cy="589.7" r="4.6" fill="#000"/></svg>
</body></html>
